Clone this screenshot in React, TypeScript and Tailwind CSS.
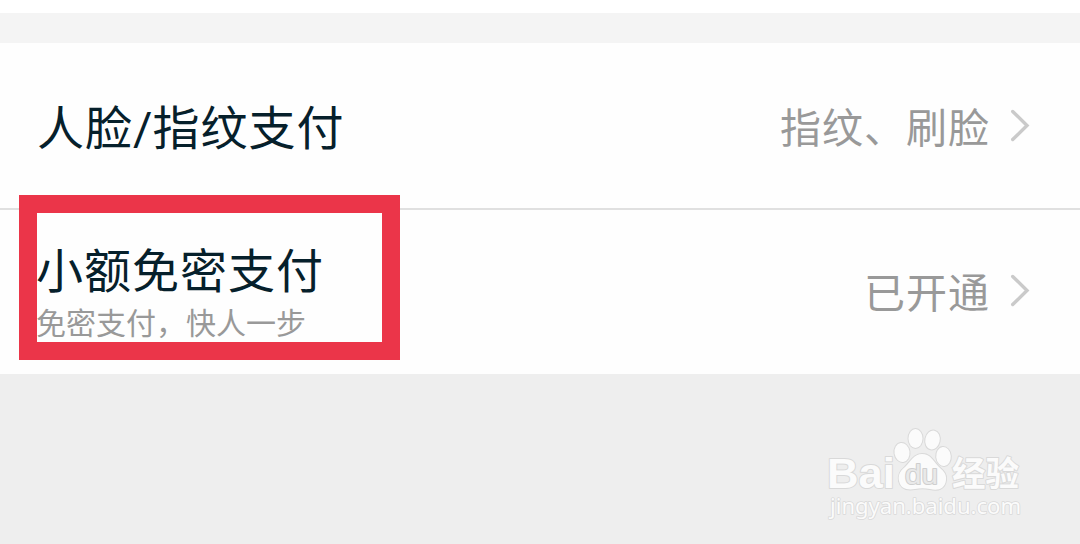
import type { ReactNode } from "react";

function Chevron() {
  return (
    <svg width="20" height="34" viewBox="0 0 20 34" className="ml-5 shrink-0" fill="none" stroke="#cacaca" strokeWidth="3.4" strokeLinecap="round" strokeLinejoin="miter">
      <path d="M2.700 2.500 L17 16.500 L2.700 30.500" />
    </svg>
  );
}

function Value({ children }: { children: ReactNode }) {
  return (
    <div className="flex items-center text-[41px] leading-[60px] tracking-[1px] text-[#999999]">
      <span className="pb-0.5">{children}</span>
      <Chevron />
    </div>
  );
}

function Watermark() {
  return (
    <svg width="204" height="100" viewBox="822 424 204 100" fill="#fbfbfb" stroke="#d9d9d9" strokeWidth="2" paintOrder="stroke" strokeLinejoin="round">
      <text x="827" y="488" fontFamily="'Liberation Sans', sans-serif" fontWeight="700" fontSize="43" textLength="68" lengthAdjust="spacingAndGlyphs">Bai</text>
      <ellipse cx="902" cy="452.500" rx="7.500" ry="9.500" transform="rotate(-8 902 452.500)" />
      <ellipse cx="915.500" cy="438.500" rx="7" ry="9.500" />
      <ellipse cx="932.500" cy="440" rx="7.200" ry="9.500" transform="rotate(12 932.500 440)" />
      <ellipse cx="943.500" cy="456.500" rx="7.300" ry="9.500" transform="rotate(-5 943.500 456.500)" />
      <path d="M922 454 C914 454 911 461 905 467 C899 472 898 476 899 481 C901 490 909 490 915 489 C920 488 925 488 930 489 C938 491 945 489 946 480 C947 473 942 470 938 466 C932 459 930 454 922 454 Z" />
      <text x="905" y="484" fill="#e9e9e9" stroke="#cfcfcf" fontFamily="'Liberation Sans', sans-serif" fontWeight="400" fontSize="27.500" textLength="33" lengthAdjust="spacingAndGlyphs">du</text>
      <text x="952" y="485.500" fontFamily="'Noto Sans CJK SC', sans-serif" fontWeight="700" fontSize="34" textLength="67" lengthAdjust="spacingAndGlyphs">经验</text>
      <text x="830" y="514" strokeWidth="1.600" fontFamily="'Noto Sans', sans-serif" fontSize="22.500" textLength="191" lengthAdjust="spacingAndGlyphs">jingyan.baidu.com</text>
    </svg>
  );
}

export default function App() {
  return (
    <div className="relative flex h-[544px] w-[1080px] flex-col overflow-hidden bg-[#eeeeee] font-['Noto_Sans_CJK_SC',sans-serif]">
      <div className="h-[13px] shrink-0 bg-white" />
      <div className="h-[30px] shrink-0 bg-[#f4f4f4]" />
      <div className="flex h-[167px] shrink-0 items-center justify-between border-b-2 border-[#e0e0e0] bg-[#fefefe] pr-[50px] pl-[37px]">
        <div className="pt-0.5 text-[47px] leading-[70px] tracking-[1px] text-[#06202b]">
          人脸<span className="font-[Roboto] tracking-normal">/</span>指纹支付
        </div>
        <Value>指纹、刷脸</Value>
      </div>
      <div className="flex h-[164px] shrink-0 items-center justify-between bg-[#fefefe] pr-[50px] pb-[3px] pl-9">
        <div className="pb-[5px]">
          <div className="text-[47px] leading-[66px] tracking-[1px] text-[#06202b]">小额免密支付</div>
          <div className="text-[30px] leading-[40px] text-[#999999]">免密支付，快人一步</div>
        </div>
        <Value>已开通</Value>
      </div>
      <div className="flex flex-1 items-end justify-end pr-[54px] pb-5">
        <Watermark />
      </div>
      <div className="absolute top-[195px] left-[19px] h-[165px] w-[381px] border-[18px] border-[#eb3549]" />
    </div>
  );
}
